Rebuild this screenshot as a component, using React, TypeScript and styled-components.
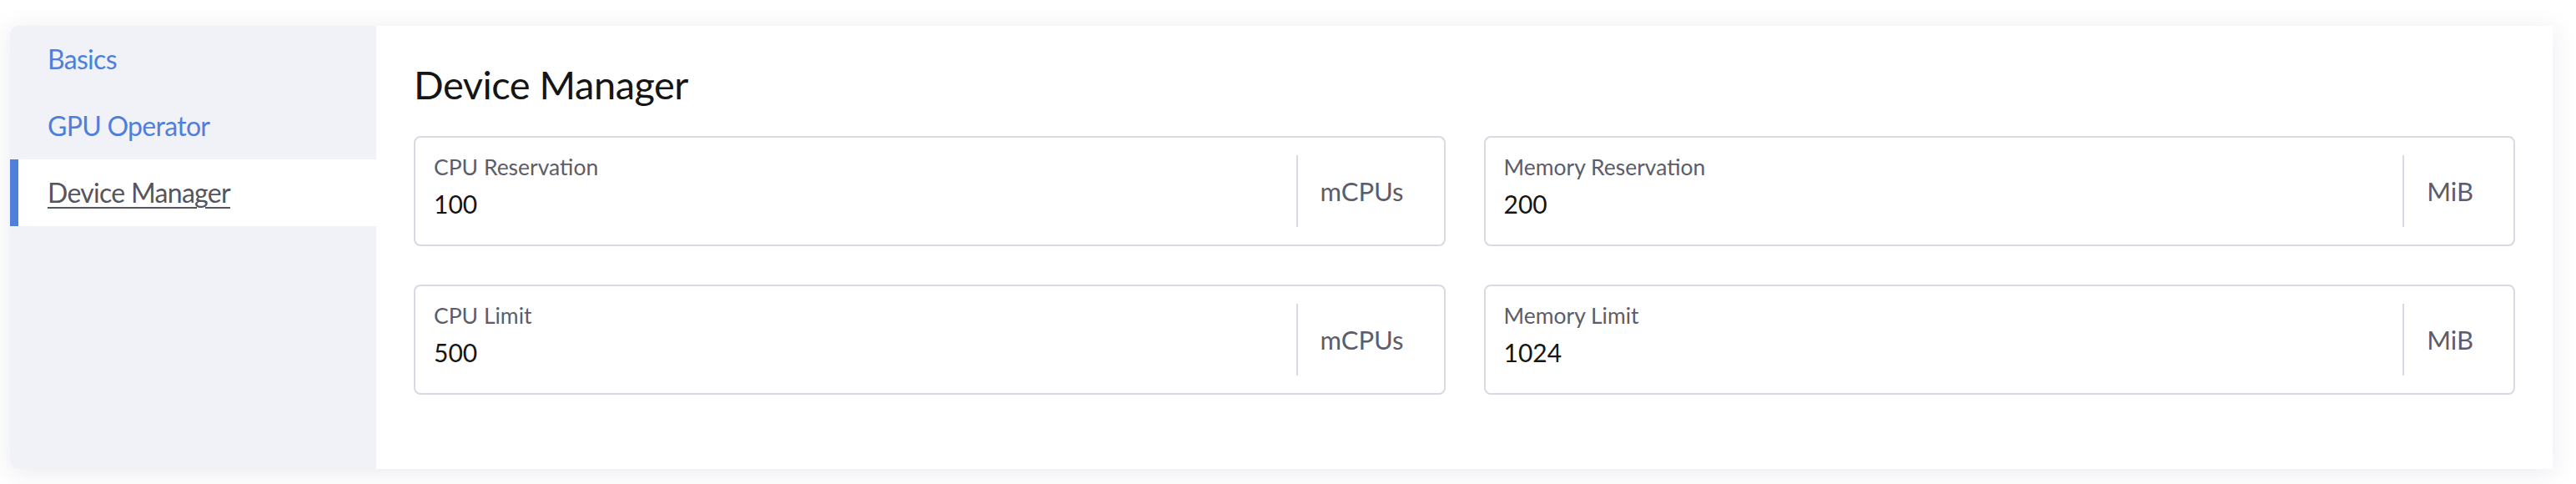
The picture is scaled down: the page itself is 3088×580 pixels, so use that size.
import React from "react";
import styled, { createGlobalStyle } from "styled-components";

const Global = createGlobalStyle`
  html, body { margin: 0; padding: 0; background: #ffffff; }
  body { font-family: Lato, "Open Sans", sans-serif; }
  * { box-sizing: border-box; }
`;

const Page = styled.div`
  width: 3088px;
  height: 580px;
  padding: 31px 28px 18px 12px;
`;

const Card = styled.div`
  display: flex;
  height: 531px;
  border-radius: 10px 0 0 10px;
  box-shadow: 0 4px 30px rgba(40, 50, 100, 0.1);
`;

const Sidebar = styled.nav`
  width: 439px;
  flex-shrink: 0;
  background: #f1f2f7;
  border-radius: 10px 0 0 10px;
  display: flex;
  flex-direction: column;
`;

const NavItem = styled.a<{ $active?: boolean }>`
  display: block;
  height: 80px;
  line-height: 80px;
  font-size: 32px;
  letter-spacing: -0.7px;
  padding-left: ${(p) => (p.$active ? "35px" : "45px")};
  border-left: ${(p) => (p.$active ? "10px solid #4f7fdc" : "none")};
  background: ${(p) => (p.$active ? "#ffffff" : "transparent")};
  color: ${(p) => (p.$active ? "#55555f" : "#4f7fdc")};
  text-decoration: ${(p) => (p.$active ? "underline" : "none")};
  text-decoration-thickness: 2px;
  text-underline-offset: 5px;
  cursor: pointer;
`;

const Main = styled.main`
  flex: 1;
  background: #ffffff;
  padding: 42px 45px 0 45px;
`;

const Heading = styled.h1`
  margin: 0 0 33px 0;
  font-size: 47px;
  line-height: 57px;
  font-weight: 400;
  letter-spacing: -0.5px;
  color: #151515;
`;

const Grid = styled.div`
  display: grid;
  grid-template-columns: 1fr 1fr;
  column-gap: 46px;
  row-gap: 46px;
`;

const Field = styled.div`
  display: flex;
  height: 132px;
  border: 2px solid #d7dae3;
  border-radius: 8px;
  align-items: center;
`;

const FieldBody = styled.div`
  flex: 1;
  align-self: stretch;
  display: flex;
  flex-direction: column;
  padding: 20px 22px 0 22px;
  gap: 10px;
`;

const Label = styled.span`
  font-size: 26.5px;
  line-height: 31px;
  color: #5c5d68;
`;

const Value = styled.span`
  font-size: 30px;
  line-height: 36px;
  color: #151515;
`;

const Unit = styled.span`
  border-left: 2px solid #d7dae3;
  height: 86px;
  display: flex;
  align-items: center;
  padding: 0 48px 0 27px;
  font-size: 31px;
  color: #5c5d68;
`;

const fields = [
  { label: "CPU Reservation", value: "100", unit: "mCPUs" },
  { label: "Memory Reservation", value: "200", unit: "MiB" },
  { label: "CPU Limit", value: "500", unit: "mCPUs" },
  { label: "Memory Limit", value: "1024", unit: "MiB" },
];

export default function App() {
  return (
    <>
      <Global />
      <Page>
        <Card>
          <Sidebar>
            <NavItem>Basics</NavItem>
            <NavItem>GPU Operator</NavItem>
            <NavItem $active>Device Manager</NavItem>
          </Sidebar>
          <Main>
            <Heading>Device Manager</Heading>
            <Grid>
              {fields.map((f) => (
                <Field key={f.label}>
                  <FieldBody>
                    <Label>{f.label}</Label>
                    <Value>{f.value}</Value>
                  </FieldBody>
                  <Unit>{f.unit}</Unit>
                </Field>
              ))}
            </Grid>
          </Main>
        </Card>
      </Page>
    </>
  );
}
